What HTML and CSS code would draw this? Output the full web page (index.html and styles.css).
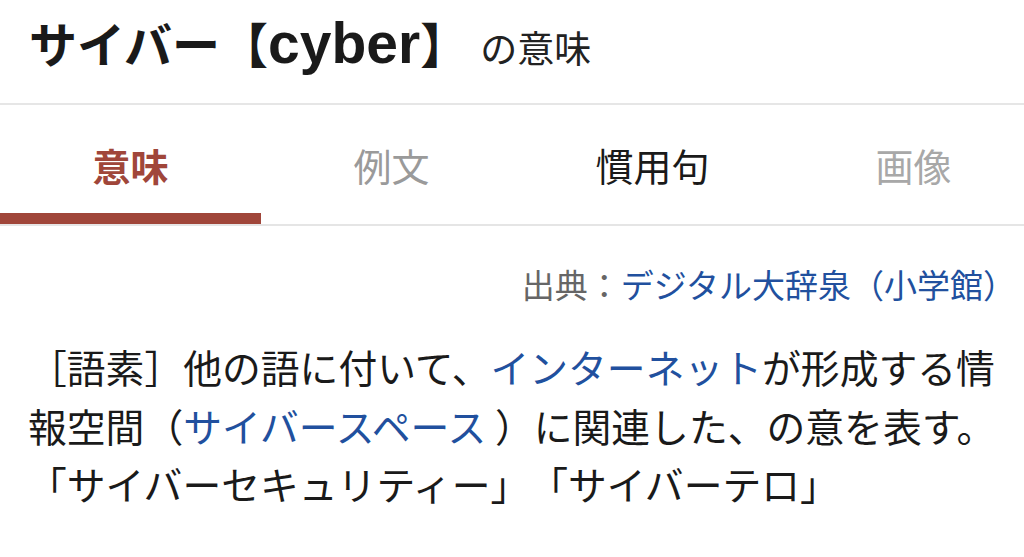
FILE: index.html
```html
<!DOCTYPE html>
<html lang="ja">
<head>
<meta charset="utf-8">
<title>サイバー【cyber】の意味</title>
<link rel="stylesheet" href="styles.css">
</head>
<body>
<div class="page">
  <header class="head">
    <h1 class="title"><span class="kana">サイバー【</span><span class="latin">cyber</span><span class="kana">】</span><span class="suffix">の意味</span></h1>
  </header>
  <nav class="tabs">
    <div class="tab active">意味</div>
    <div class="tab muted">例文</div>
    <div class="tab">慣用句</div>
    <div class="tab muted2">画像</div>
  </nav>
  <main class="content">
    <p class="source"><span class="src-label">出典：</span><span class="link">デジタル大辞泉（小学館）</span></p>
    <p class="desc">［語素］他の語に付いて、<span class="link">インターネット</span>が形成する情報空間（<span class="link">サイバースペース</span> ）に関連した、の意を表す。<br>「サイバーセキュリティー」「サイバーテロ」</p>
  </main>
</div>
</body>
</html>
```
FILE: styles.css
```css
html, body {
  margin: 0;
  padding: 0;
  background: #ffffff;
  overflow: hidden;
}
body {
  font-family: "Noto Sans CJK JP", "Noto Sans", sans-serif;
  color: #1a1a1a;
  text-spacing-trim: space-all;
}
.page {
  width: 1044px;
}
.head {
  height: 103px;
  border-bottom: 2px solid #e6e6e6;
  box-sizing: content-box;
}
.title {
  margin: 0;
  padding-left: 29px;
  padding-top: 7px;
  line-height: 70px;
  font-weight: 700;
  white-space: nowrap;
}
.kana {
  font-size: 48px;
  font-family: "Noto Sans CJK JP", sans-serif;
}
.latin {
  font-size: 57px;
  font-family: "Liberation Sans", Arial, sans-serif;
}
.suffix {
  font-size: 37px;
  font-weight: 400;
  margin-left: 12px;
  color: #222;
}
.tabs {
  display: flex;
  border-bottom: 2px solid #e5e5e5;
}
.tab {
  width: 261px;
  flex: none;
  height: 119px;
  box-sizing: border-box;
  padding-top: 35px;
  text-align: center;
  font-size: 38px;
  line-height: 50px;
  color: #1a1a1a;
  position: relative;
}
.tab.active {
  color: #a0463a;
  font-weight: 700;
}
.tab.active::after {
  content: "";
  position: absolute;
  left: 0;
  right: 0;
  bottom: 0;
  height: 11px;
  background: #a0463a;
}
.tab.muted {
  color: #9a9a9a;
}
.tab.muted2 {
  color: #a8a8a8;
}
.content {
  padding: 0 28px;
}
.source {
  margin: 0;
  padding-top: 36px;
  text-align: right;
  font-size: 33px;
  line-height: 44px;
  white-space: nowrap;
}
.src-label {
  color: #666666;
}
.link {
  color: #21509e;
}
.desc {
  margin: 31px 0 0;
  font-size: 38.8px;
  line-height: 58.5px;
  color: #1a1a1a;
}
```
